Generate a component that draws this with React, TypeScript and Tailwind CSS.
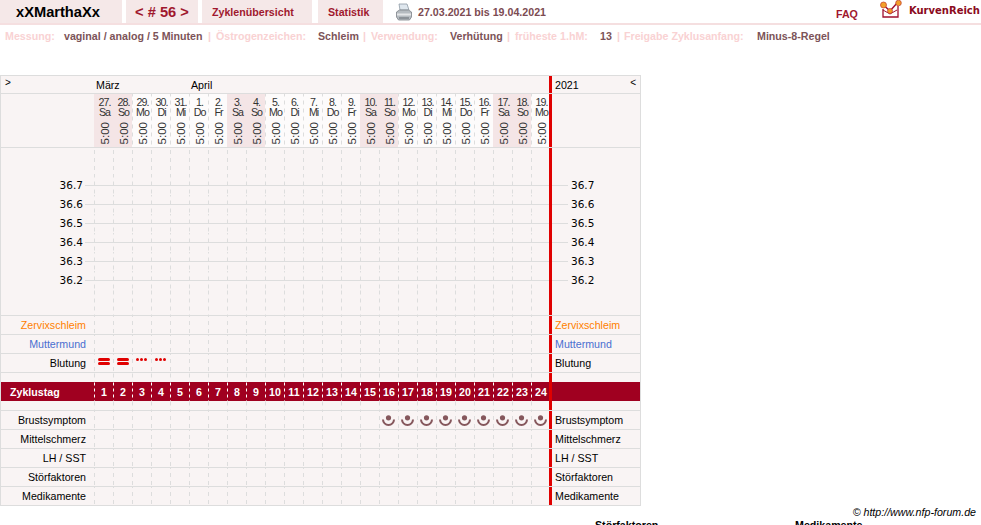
const days = [
  ["27.", "Sa"], ["28.", "So"], ["29.", "Mo"], ["30.", "Di"], ["31.", "Mi"], ["1.", "Do"], ["2.", "Fr"], ["3.", "Sa"],
  ["4.", "So"], ["5.", "Mo"], ["6.", "Di"], ["7.", "Mi"], ["8.", "Do"], ["9.", "Fr"], ["10.", "Sa"], ["11.", "So"],
  ["12.", "Mo"], ["13.", "Di"], ["14.", "Mi"], ["15.", "Do"], ["16.", "Fr"], ["17.", "Sa"], ["18.", "So"], ["19.", "Mo"],
];

const temps = ["36.7", "36.6", "36.5", "36.4", "36.3", "36.2"];
const dash =
  "bg-[linear-gradient(#dddddd_50%,transparent_50%)] bg-[length:1px_8px] bg-repeat-y bg-left";

function Cells({ children }: { children?: (i: number) => React.ReactNode }) {
  return (
    <>
      {days.map((_, i) => (
        <div key={i} className={`flex h-full w-[19px] shrink-0 items-center justify-center ${dash}`}>
          {children?.(i)}
        </div>
      ))}
    </>
  );
}

function RedBar() {
  return <div className="relative z-10 -ml-[1px] h-full w-[3px] shrink-0 bg-[#e00000]" />;
}

function Row({
  label,
  color = "text-black",
  children,
}: {
  label?: string;
  color?: string;
  children?: (i: number) => React.ReactNode;
}) {
  return (
    <div className={`flex h-[19px] border-b border-[#dddddd] text-[10.67px] ${color}`}>
      <div className="flex w-[93px] shrink-0 items-center justify-end pr-[8px]">{label}</div>
      <Cells>{children}</Cells>
      <RedBar />
      <div className="flex flex-1 items-center pl-[3px]">{label}</div>
    </div>
  );
}

function TempRow({ value }: { value: string }) {
  return (
    <div className="relative flex h-[19px] text-black">
      <div className="absolute top-[9px] right-[72px] left-[84px] h-px bg-[#dddddd]" />
      <div className="relative flex w-[93px] shrink-0 items-center justify-end pr-[11px] font-['DejaVu_Sans'] text-[10.5px]">
        {value}
      </div>
      <Cells />
      <RedBar />
      <div className="relative flex flex-1 items-center pl-[19px] font-['DejaVu_Sans'] text-[10.5px]">{value}</div>
    </div>
  );
}

function Spacer({ height, border = true }: { height: string; border?: boolean }) {
  return (
    <div className={`flex ${height} ${border ? "border-b border-[#dddddd]" : ""}`}>
      <div className="w-[93px] shrink-0" />
      <Cells />
      <RedBar />
    </div>
  );
}

function Heavy() {
  return (
    <div className="-mt-[4px] flex flex-col gap-[1px]">
      <div className="h-[3px] w-[12px] rounded-full bg-[#e00000]" />
      <div className="h-[3px] w-[12px] rounded-full bg-[#e00000]" />
    </div>
  );
}

function Light() {
  return (
    <div className="-mt-[8px] flex gap-[1px]">
      <div className="h-[3px] w-[3px] rounded-full bg-[#e00000]" />
      <div className="h-[3px] w-[3px] rounded-full bg-[#e00000]" />
      <div className="h-[3px] w-[3px] rounded-full bg-[#e00000]" />
    </div>
  );
}

function BreastIcon() {
  return (
    <svg width="13" height="11" viewBox="0 0 13 11" className="mt-[1px]">
      <path d="M1 4.5a5.5 5.5 0 0 0 11 0" fill="none" stroke="#85575c" strokeWidth="2" />
      <circle cx="6.5" cy="2.8" r="2.6" fill="#85575c" />
    </svg>
  );
}

function PrinterIcon() {
  return (
    <svg width="18" height="18" viewBox="0 0 18 18">
      <path d="M4 1h8l2 6H5z" fill="#dfe7ee" stroke="#8d99a5" strokeWidth="0.8" />
      <path d="M1.5 9l3-2h9l3 2v5l-2 3H3.5l-2-3z" fill="#b5bbc0" stroke="#7d8389" strokeWidth="0.8" />
      <path d="M2 10.5h14v2H2z" fill="#e4e6e8" />
      <path d="M4 14h10v2H4z" fill="#8c9298" />
    </svg>
  );
}

function Logo() {
  return (
    <svg width="24" height="19" viewBox="0 0 24 19">
      <path d="M3 9v8h15V6" fill="none" stroke="#a01030" strokeWidth="1.3" />
      <path d="M3.5 5l6.5 6 8-9" fill="none" stroke="#a01030" strokeWidth="1.5" />
      <path d="M3 10l7 4 7-4" fill="none" stroke="#a01030" strokeWidth="1" />
      <circle cx="3.5" cy="5" r="3" fill="#f2a02a" stroke="#c0392b" strokeWidth="0.7" />
      <circle cx="10" cy="11" r="2.5" fill="#f2a02a" stroke="#c0392b" strokeWidth="0.7" />
      <circle cx="18.5" cy="3" r="2.8" fill="#f2a02a" stroke="#c0392b" strokeWidth="0.7" />
    </svg>
  );
}

export default function App() {
  return (
    <div className="h-[525px] w-[981px] overflow-hidden bg-white font-['Liberation_Sans',Arial,sans-serif]">
      {/* kopfzeile */}
      <div className="flex h-[25px] items-stretch border-b-2 border-[#f5dfe0] font-bold">
        <div className="flex w-[122px] items-center bg-[#f5e8e8] pl-[16px] text-[14.67px] text-black">xXMarthaXx</div>
        <div className="ml-[4px] flex w-[72px] items-center justify-center bg-[#f5e8e8] text-[14.67px] text-[#a0182e]">
          &lt; # 56 &gt;
        </div>
        <div className="ml-[4px] flex w-[110px] items-center bg-[#f5e8e8] pl-[10px] text-[10.67px] text-[#a0182e]">
          Zyklenübersicht
        </div>
        <div className="ml-[6px] flex w-[65px] items-center bg-[#f5e8e8] pl-[10px] text-[10.67px] text-[#a0182e]">
          Statistik
        </div>
        <div className="ml-[12px] flex w-[18px] items-center">
          <PrinterIcon />
        </div>
        <div className="ml-[5px] flex w-[128px] items-center text-[10.67px] whitespace-nowrap text-[#7c4b52]">
          27.03.2021 bis 19.04.2021
        </div>
        <div className="ml-[290px] flex items-center pt-[5px] text-[10.67px] text-[#a0182e]">FAQ</div>
        <div className="ml-[22px] flex items-start">
          <Logo />
        </div>
        <div className="ml-[5px] pt-[3px] font-['DejaVu_Sans'] text-[10px] whitespace-nowrap text-[#8a0a20]">KurvenReich</div>
      </div>

      {/* angaben */}
      <div className="flex h-[22px] items-center pl-[5px] text-[10.67px] font-bold whitespace-nowrap text-[#f9d2d3]">
        <span className="w-[59px]">Messung:</span>
        <span className="w-[144px] text-[#7c5358]">vaginal / analog / 5 Minuten</span>
        <span className="w-[8px]">|</span>
        <span className="w-[102px]">Östrogenzeichen:</span>
        <span className="w-[45px] text-[#7c5358]">Schleim</span>
        <span className="w-[8px]">|</span>
        <span className="w-[79px]">Verwendung:</span>
        <span className="w-[57px] text-[#7c5358]">Verhütung</span>
        <span className="w-[8px]">|</span>
        <span className="w-[85px]">früheste 1.hM:</span>
        <span className="w-[17px] text-[#7c5358]">13</span>
        <span className="w-[7px]">|</span>
        <span className="w-[133px]">Freigabe Zyklusanfang:</span>
        <span className="text-[#7c5358]">Minus-8-Regel</span>
      </div>

      {/* kurvenblatt */}
      <div className="mt-[28px] w-[641px] border-t border-r border-l border-[#dddddd] bg-[#f9f4f4]">
        <div className="flex h-[18px] border-b border-[#dddddd] text-[10.67px]">
          <div className="w-[93px] shrink-0 pl-[4px] text-[10px] leading-[14px]">&gt;</div>
          <div className="relative w-[456px] shrink-0 pl-[2px] leading-[19px]">
            März
            <span className="absolute top-0 left-[97px]">April</span>
          </div>
          <RedBar />
          <div className="flex flex-1 justify-between pr-[4px] pl-[3px] leading-[19px]">
            <span>2021</span>
            <span className="text-[10px] leading-[14px]">&lt;</span>
          </div>
        </div>

        <div className="flex h-[54px] border-b border-[#dddddd]">
          <div className="w-[93px] shrink-0" />
          {days.map(([date, name], i) => {
            const weekend = name === "Sa" || name === "So";
            return (
              <div
                key={i}
                className={`flex w-[19px] shrink-0 flex-col items-center pt-[3px] pl-[2px] text-[10.67px] leading-[10px] tracking-[-1px] text-[#333333] ${
                  weekend ? "bg-[#f4e5e6]" : `bg-[#fdfbfb] ${dash}`
                }`}
              >
                <span>{date}</span>
                <span>{name}</span>
                <span className="mt-[5px] rotate-180 text-[11.5px] leading-[12px] tracking-normal [writing-mode:vertical-rl]">
                  5:00
                </span>
              </div>
            );
          })}
          <RedBar />
        </div>

        <Spacer height="h-[28px]" border={false} />
        {temps.map((t) => (
          <TempRow key={t} value={t} />
        ))}
        <Spacer height="h-[26px]" />

        <Row label="Zervixschleim" color="text-[#ff8000]" />
        <Row label="Muttermund" color="text-[#4a6fd0]" />
        <Row label="Blutung">{(i) => (i < 2 ? <Heavy /> : i < 4 ? <Light /> : null)}</Row>
        <Spacer height="h-[9px]" border={false} />

        <div className="flex h-[19px] bg-[#a00020] text-[10.67px] font-bold text-white">
          <div className="flex w-[93px] shrink-0 items-center pl-[9px]">Zyklustag</div>
          {days.map((_, i) => (
            <div
              key={i}
              className="flex w-[19px] shrink-0 items-center justify-center bg-[linear-gradient(#ffffff_50%,transparent_50%)] bg-[length:1px_6px] bg-left bg-repeat-y pl-px"
            >
              {i + 1}
            </div>
          ))}
          <RedBar />
        </div>
        <Spacer height="h-[10px]" />

        <Row label="Brustsymptom">{(i) => (i >= 15 ? <BreastIcon /> : null)}</Row>
        <Row label="Mittelschmerz" />
        <Row label="LH / SST" />
        <Row label="Störfaktoren" />
        <Row label="Medikamente" />
      </div>

      {/* fusszeile */}
      <div className="pr-[5px] text-right text-[10.67px] leading-[13px] text-black italic">© http://www.nfp-forum.de</div>
      <div className="flex pl-[595px] text-[10.67px] leading-[13px] font-bold">
        <span className="w-[200px]">Störfaktoren</span>
        <span>Medikamente</span>
      </div>
    </div>
  );
}
